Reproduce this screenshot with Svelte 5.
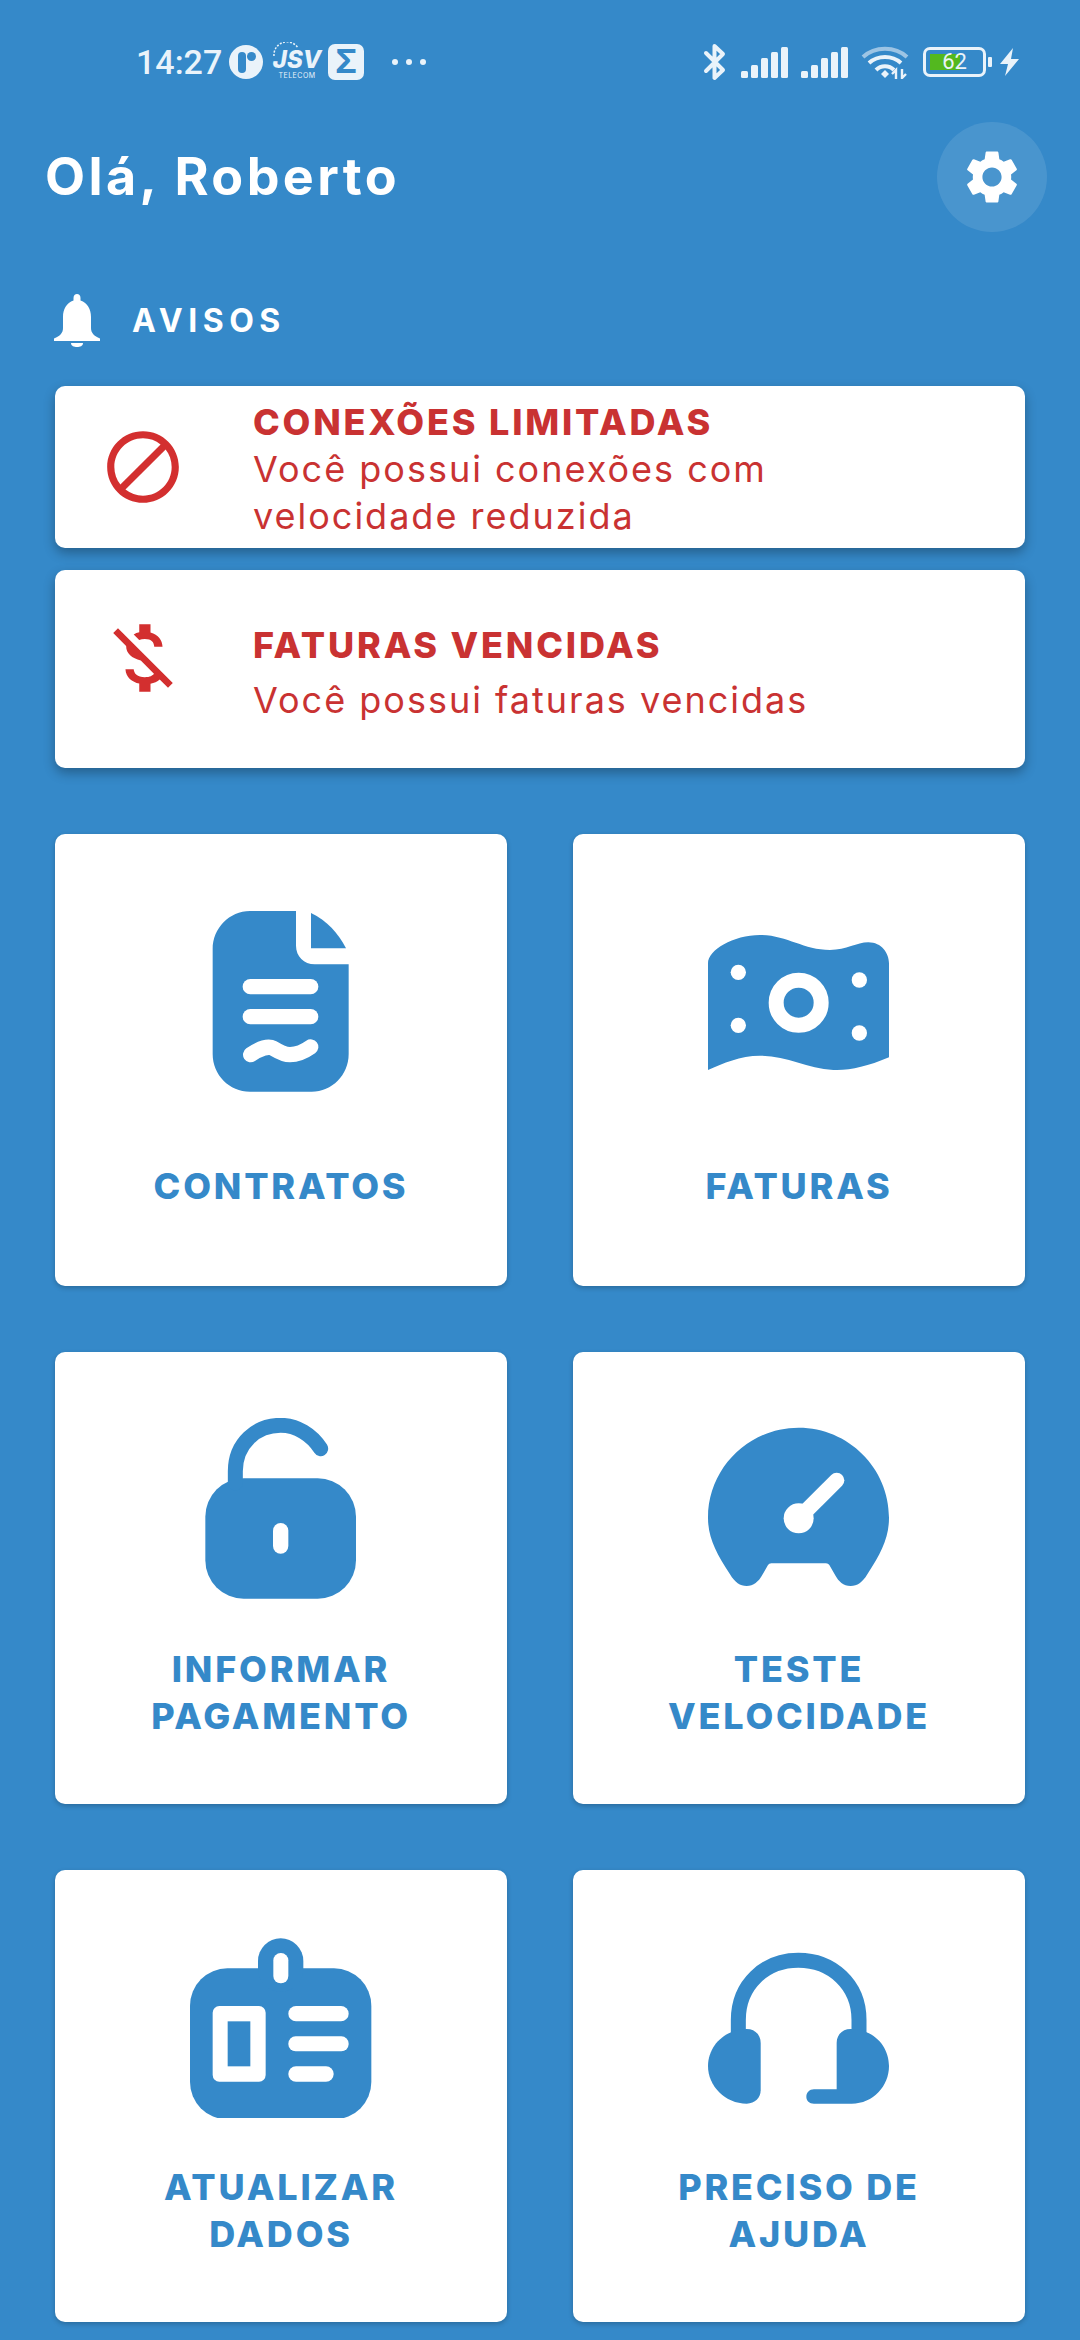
<script>
  const signalBars = [
    { x: 0, h: 7 },
    { x: 10, h: 13 },
    { x: 20, h: 20 },
    { x: 30, h: 26 },
    { x: 40, h: 31 }
  ];
</script>

{#snippet signal()}
  <svg class="signal" viewBox="0 0 48 31">
    {#each signalBars as bar}
      <rect x={bar.x} y={31 - bar.h} width="7" height={bar.h} rx="1.5" fill="#eaf3fa" />
    {/each}
  </svg>
{/snippet}

<div class="page">
  <div class="status">
    <div class="status-left">
      <span class="time">14:27</span>
      <svg class="disc" viewBox="0 0 34 34">
        <circle cx="17" cy="17" r="17" fill="#eaf3fa" />
        <rect x="9" y="7" width="8" height="21" rx="4" fill="#3589c9" />
        <circle cx="22.5" cy="11.5" r="4.5" fill="#3589c9" />
      </svg>
      <div class="jsv">
        <svg class="jsv-arc" viewBox="0 0 30 14">
          <path d="M2 14A13 13 0 0 1 26 6" fill="none" stroke="#eaf3fa" stroke-width="1.5" stroke-dasharray="2 1.5" />
        </svg>
        <span class="jsv-name">JSV</span>
        <span class="jsv-sub">TELECOM</span>
      </div>
      <div class="sigma">Σ</div>
      <div class="dots"><i></i><i></i><i></i></div>
    </div>
    <div class="status-right">
      <svg class="bt" viewBox="0 0 25 38">
        <path d="M3 10 20 27 11.5 35V3L20 11 3 28" fill="none" stroke="#eaf3fa" stroke-width="4" stroke-linecap="round" stroke-linejoin="round" />
      </svg>
      {@render signal()}
      {@render signal()}
      <svg class="wifi" viewBox="0 0 48 34">
        <path d="M2 12C14 1 34 1 46 12" fill="none" stroke="#9cc4e4" stroke-width="4" />
        <path d="M8 18C17 10 31 10 40 18" fill="none" stroke="#eaf3fa" stroke-width="4" />
        <path d="M15 25C20 20 28 20 33 25" fill="none" stroke="#eaf3fa" stroke-width="4" />
        <path d="M20 29 24 25 28 29 24 33Z" fill="#eaf3fa" />
        <path d="M35 34V25L31 29M41 24V33L45 29" fill="none" stroke="#eaf3fa" stroke-width="2.4" />
      </svg>
      <div class="battery">
        <div class="battery-body">
          <div class="battery-fill" style="width: 62%"></div>
          <span class="battery-text">62</span>
        </div>
        <div class="battery-nub"></div>
      </div>
      <svg class="bolt" viewBox="0 0 21 28">
        <path d="M14 0 1 16H9L6 28 20 11H12Z" fill="#eaf3fa" />
      </svg>
    </div>
  </div>

  <header class="header">
    <h1>Olá, Roberto</h1>
    <div class="gear">
      <svg viewBox="0 0 24 24" width="64" height="64">
        <path fill="#fff" d="M19.14 12.94c.04-.3.06-.61.06-.94 0-.32-.02-.64-.07-.94l2.03-1.58c.18-.14.23-.41.12-.61l-1.92-3.32c-.12-.22-.37-.29-.59-.22l-2.39.96c-.5-.38-1.03-.7-1.62-.94l-.36-2.54c-.04-.24-.24-.41-.48-.41h-3.84c-.24 0-.43.17-.47.41l-.36 2.54c-.59.24-1.13.57-1.62.94l-2.39-.96c-.22-.08-.47 0-.59.22L2.74 8.87c-.12.21-.08.47.12.61l2.03 1.58c-.05.3-.09.63-.09.94s.02.64.07.94l-2.03 1.58c-.18.14-.23.41-.12.61l1.92 3.32c.12.22.37.29.59.22l2.39-.96c.5.38 1.03.7 1.62.94l.36 2.54c.05.24.24.41.48.41h3.84c.24 0 .44-.17.47-.41l.36-2.54c.59-.24 1.13-.56 1.62-.94l2.39.96c.22.08.47 0 .59-.22l1.92-3.32c.12-.22.07-.47-.12-.61l-2.01-1.58zM12 15.6c-1.98 0-3.6-1.62-3.6-3.6s1.62-3.6 3.6-3.6 3.6 1.62 3.6 3.6-1.62 3.6-3.6 3.6z" />
      </svg>
    </div>
  </header>

  <div class="avisos">
    <svg viewBox="0 0 46 53" width="46" height="53">
      <path fill="#fff" d="M23 0C25 0 26.500 1.500 26.500 4V6.500C33.500 9 37 15 37 23V34C37 39 40 42 46 44.500V47H0V44.500C6 42 9 39 9 34V23C9 15 12.500 9 19.500 6.500V4C19.500 1.500 21 0 23 0Z" />
      <path fill="#fff" d="M17 49H29C29 52 26 53 23 53 20 53 17 52 17 49Z" />
    </svg>
    <span>AVISOS</span>
  </div>

  <div class="notice">
    <div class="notice-icon">
      <svg viewBox="0 0 24 24" width="86" height="86">
        <path fill="#d32f2f" d="M12 2C6.480 2 2 6.480 2 12s4.480 10 10 10 10-4.480 10-10S17.520 2 12 2zM4 12c0-4.420 3.580-8 8-8 1.850 0 3.550.63 4.900 1.690L5.690 16.900C4.630 15.550 4 13.850 4 12zm8 8c-1.850 0-3.550-.63-4.900-1.690L18.310 7.100C19.370 8.450 20 10.150 20 12c0 4.420-3.580 8-8 8z" />
      </svg>
    </div>
    <div class="notice-text">
      <div class="notice-title">CONEXÕES LIMITADAS</div>
      <div class="notice-body">Você possui conexões com<br />velocidade reduzida</div>
    </div>
  </div>

  <div class="notice tall">
    <div class="notice-icon">
      <svg viewBox="0 0 24 24" width="90" height="90">
        <path fill="#d32f2f" d="M12.500 6.900c1.780 0 2.440.85 2.500 2.100h2.210c-.07-1.720-1.120-3.300-3.210-3.810V3h-3v2.160c-.53.12-1.030.3-1.480.54l1.470 1.470c.41-.17.91-.27 1.510-.27zM5.330 4.060L4.060 5.330 7.500 8.770c0 2.080 1.560 3.210 3.910 3.910l3.510 3.510c-.34.48-1.050.91-2.420.91-2.060 0-2.870-.92-2.980-2.100h-2.200c.12 2.190 1.760 3.420 3.680 3.830V21h3v-2.150c.96-.18 1.830-.55 2.450-1.120l2.220 2.220 1.270-1.270L5.330 4.060z" />
      </svg>
    </div>
    <div class="notice-text">
      <div class="notice-title">FATURAS VENCIDAS</div>
      <div class="notice-body">Você possui faturas vencidas</div>
    </div>
  </div>

  <div class="tiles">
    <div class="tile">
      <svg viewBox="0 66 546 546">
        <path class="fg" d="M68 180C68 118 118 66 180 66H318V170C318 202 342 226 374 226H476V495C476 558 426 608 365 608H180C118 608 68 558 68 495Z" />
        <path class="fg" d="M363 72C410 95 445 132 468 178H363Z" />
        <rect class="cut" x="158" y="270" width="227" height="46" rx="23" />
        <rect class="cut" x="158" y="360" width="227" height="46" rx="23" />
        <path class="cut-line" d="M182 497C210 478 235 470 250 478 270 490 285 497 300 497 325 497 345 486 362 474" />
      </svg>
      <div class="label">CONTRATOS</div>
    </div>

    <div class="tile">
      <svg viewBox="54 3 546 546">
        <path class="fg" d="M54 160C54 120 130 75 210 75 290 75 340 120 420 120 470 120 500 97 535 97 575 97 597 130 597 160V442C530 470 480 482 430 480 350 475 290 437 210 437 150 437 100 460 54 480Z" />
        <circle class="cut" cx="145" cy="187" r="23" />
        <circle class="cut" cx="508" cy="210" r="23" />
        <circle class="cut" cx="145" cy="346" r="23" />
        <circle class="cut" cx="508" cy="369" r="23" />
        <circle cx="326" cy="278" r="67.500" fill="none" stroke="#fff" stroke-width="45" />
      </svg>
      <div class="label">FATURAS</div>
    </div>

    <div class="tile two">
      <svg viewBox="0 55 546 546">
        <rect class="fg" x="46" y="236" width="452" height="361" rx="115" />
        <path class="fg-line" d="M136 250V215C136 130 200 77 272 77 320 77 365 105 392 147" />
        <rect class="cut" x="249" y="370" width="46" height="92" rx="23" />
      </svg>
      <div class="label">INFORMAR<br />PAGAMENTO</div>
    </div>

    <div class="tile two">
      <svg viewBox="54 21 546 546">
        <path class="fg" d="M326 50C475 50 597 171 597 320 597 380 574 425 532 490 517 515 502 525 482 525 460 525 445 510 437 495L418 462Q415 457 408 457H244Q237 457 234 462L215 495C207 510 190 525 170 525 150 525 135 515 120 490 78 425 54 380 54 320 54 171 177 50 326 50Z" />
        <circle class="cut" cx="326" cy="322" r="45" />
        <path class="cut-line" d="M340 308 440 208" />
      </svg>
      <div class="label">TESTE<br />VELOCIDADE</div>
    </div>

    <div class="tile two">
      <svg viewBox="30 15 546 546">
        <rect class="fg" x="30" y="112" width="544" height="453" rx="112" />
        <rect class="fg" x="234" y="22" width="136" height="160" rx="68" />
        <rect class="cut" x="280" y="66" width="45" height="91" rx="22" />
        <rect class="cut" x="98" y="225" width="159" height="227" rx="20" />
        <rect class="fg" x="143" y="271" width="68" height="135" />
        <rect class="cut" x="325" y="225" width="181" height="46" rx="23" />
        <rect class="cut" x="325" y="316" width="181" height="45" rx="22" />
        <rect class="cut" x="325" y="406" width="136" height="46" rx="23" />
      </svg>
      <div class="label">ATUALIZAR<br />DADOS</div>
    </div>

    <div class="tile two">
      <svg viewBox="54 15 546 546">
        <path class="fg-line butt" d="M145 310V267C145 160 225 88 325 88 425 88 507 160 507 267V310" />
        <path class="fg" d="M170 294C195 294 212 312 212 335V478C212 500 195 518 170 518 105 518 54 465 54 405 54 345 105 294 170 294Z" />
        <path class="fg" d="M482 294C457 294 440 312 440 335V475H372C358 475 349 485 349 497 349 509 358 518 372 518H485C550 518 597 465 597 405 597 345 550 294 482 294Z" />
      </svg>
      <div class="label">PRECISO DE<br />AJUDA</div>
    </div>
  </div>
</div>

<style>
  :global(body) {
    margin: 0;
    background: #3589c9;
  }

  .page {
    height: 2340px;
    overflow: hidden;
    background: #3589c9;
    font-family: Inter, "Liberation Sans", sans-serif;
  }

  .status {
    height: 122px;
    padding: 2px 60px 0 136px;
    box-sizing: border-box;
    display: flex;
    align-items: center;
    justify-content: space-between;
    color: #eaf3fa;
  }

  .status-left,
  .status-right {
    display: flex;
    align-items: center;
  }

  .time {
    font-family: Roboto, sans-serif;
    font-size: 34px;
    font-weight: 500;
    width: 93px;
  }

  .disc {
    width: 34px;
    height: 34px;
  }

  .jsv {
    position: relative;
    width: 50px;
    height: 40px;
    margin: 0 6px 0 9px;
    text-align: center;
  }

  .jsv-arc {
    position: absolute;
    left: 0;
    top: 0;
    width: 30px;
    height: 14px;
  }

  .jsv-name {
    position: absolute;
    left: 0;
    top: 6px;
    width: 50px;
    font-size: 24px;
    line-height: 24px;
    font-weight: 800;
    font-style: italic;
  }

  .jsv-sub {
    position: absolute;
    left: 0;
    top: 30px;
    width: 50px;
    font-size: 7px;
    line-height: 8px;
    letter-spacing: 0.5px;
  }

  .sigma {
    width: 36px;
    height: 36px;
    border-radius: 7px;
    background: #eaf3fa;
    color: #3589c9;
    font-size: 32px;
    line-height: 36px;
    font-weight: 700;
    text-align: center;
  }

  .dots {
    display: flex;
    gap: 8px;
    margin-left: 28px;
  }

  .dots i {
    width: 6px;
    height: 6px;
    border-radius: 50%;
    background: #eaf3fa;
  }

  .bt {
    width: 25px;
    height: 38px;
  }

  .signal {
    width: 48px;
    height: 31px;
    margin-left: 13px;
    align-self: flex-end;
    margin-bottom: 3px;
  }

  .signal + .signal {
    margin-left: 12px;
  }

  .wifi {
    width: 48px;
    height: 34px;
    margin-left: 12px;
  }

  .battery {
    display: flex;
    align-items: center;
    margin-left: 14px;
  }

  .battery-body {
    position: relative;
    width: 63px;
    height: 30px;
    box-sizing: border-box;
    border: 3px solid #eaf3fa;
    border-radius: 7px;
    padding: 4px;
  }

  .battery-fill {
    height: 100%;
    background: #53b81f;
  }

  .battery-text {
    position: absolute;
    left: 0;
    right: 0;
    top: 0;
    font-family: Roboto, sans-serif;
    font-size: 22px;
    line-height: 24px;
    text-align: center;
    color: #eaf3fa;
  }

  .battery-nub {
    width: 4px;
    height: 10px;
    margin-left: 2px;
    border-radius: 1px;
    background: #eaf3fa;
  }

  .bolt {
    width: 21px;
    height: 28px;
    margin-left: 7px;
  }

  .header {
    height: 110px;
    padding: 0 33px 0 45px;
    display: flex;
    align-items: center;
    justify-content: space-between;
  }

  h1 {
    margin: 0;
    color: #fff;
    font-size: 52px;
    font-weight: 700;
    letter-spacing: 3.4px;
    line-height: 108px;
  }

  .gear {
    width: 110px;
    height: 110px;
    border-radius: 50%;
    background: rgba(255, 255, 255, 0.1);
    display: flex;
    align-items: center;
    justify-content: center;
  }

  .avisos {
    margin-top: 62px;
    padding-left: 54px;
    height: 53px;
    display: flex;
    align-items: center;
    gap: 32px;
    color: #fff;
    font-size: 32px;
    font-weight: 700;
    letter-spacing: 5.5px;
  }

  .notice {
    margin: 0 55px;
    height: 162px;
    background: #fff;
    border-radius: 10px;
    box-shadow: 0 5px 12px rgba(0, 0, 0, 0.3);
    display: flex;
    color: #c93232;
  }

  .avisos + .notice {
    margin-top: 39px;
  }

  .notice.tall {
    height: 198px;
    margin-top: 22px;
  }

  .notice-icon {
    width: 90px;
    margin: 38px 65px 0 43px;
    display: flex;
    justify-content: center;
  }

  .tall .notice-icon {
    margin-top: 43px;
  }

  .notice-text {
    padding-top: 13px;
    font-size: 36px;
    line-height: 47px;
    letter-spacing: 2px;
  }

  .tall .notice-text {
    padding-top: 52px;
  }

  .notice-title {
    font-weight: 800;
    letter-spacing: 2.8px;
  }

  .tall .notice-body {
    margin-top: 8px;
  }

  .tiles {
    margin: 66px 55px 0;
    display: grid;
    grid-template-columns: 452px 452px;
    grid-auto-rows: 452px;
    gap: 66px;
  }

  .tile {
    background: #fff;
    border-radius: 10px;
    box-shadow: 0 2px 5px rgba(0, 0, 0, 0.22);
    box-sizing: border-box;
    padding-top: 77px;
    display: flex;
    flex-direction: column;
    align-items: center;
    gap: 70px;
  }

  .tile.two {
    padding-top: 66px;
    gap: 46px;
  }

  .tile svg {
    width: 182px;
    height: 182px;
    flex: none;
  }

  .label {
    color: #3589c9;
    font-size: 36px;
    line-height: 47px;
    font-weight: 800;
    text-align: center;
    letter-spacing: 2.8px;
  }

  .fg {
    fill: #3589c9;
  }

  .cut {
    fill: #fff;
  }

  .cut-line {
    fill: none;
    stroke: #fff;
    stroke-width: 46;
    stroke-linecap: round;
  }

  .fg-line {
    fill: none;
    stroke: #3589c9;
    stroke-width: 45;
    stroke-linecap: round;
  }

  .fg-line.butt {
    stroke-linecap: butt;
  }
</style>
